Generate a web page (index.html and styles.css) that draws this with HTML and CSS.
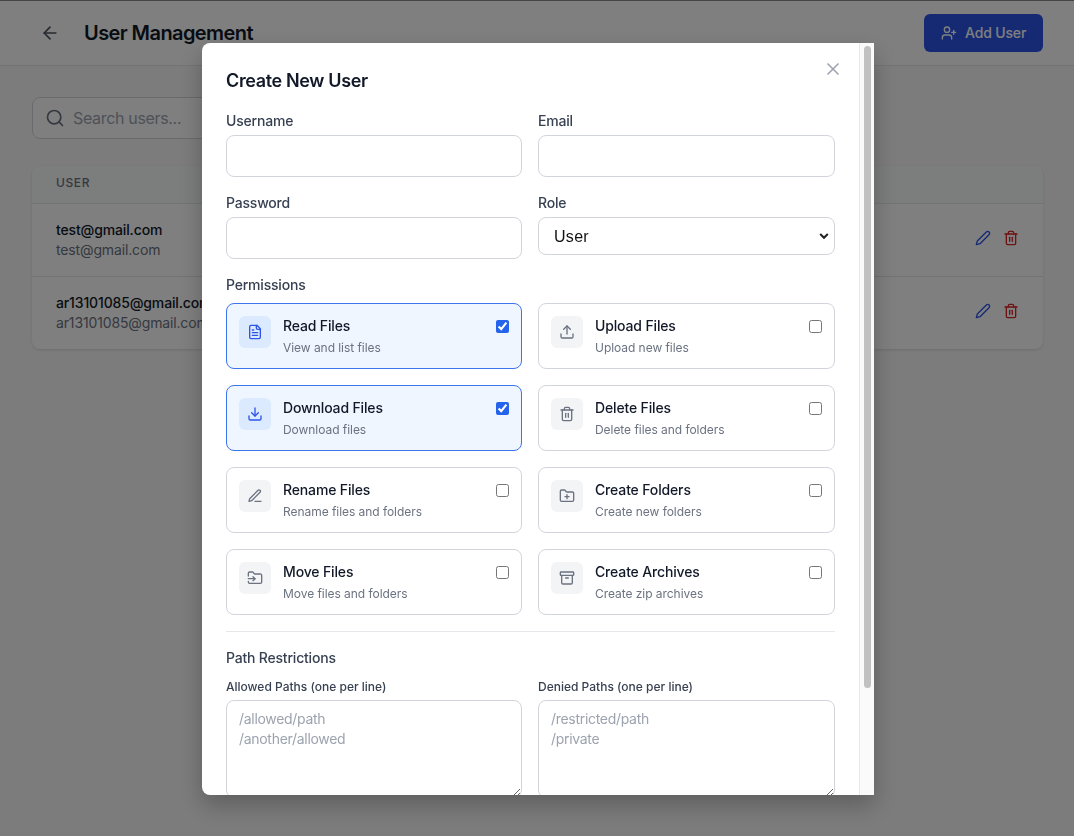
FILE: index.html
```html
<!DOCTYPE html>
<html lang="en">
<head>
    <meta charset="UTF-8">
    <title>User Management</title>
    <link rel="stylesheet" href="styles.css">
</head>
<body>
    <header class="topbar">
        <div class="topbar-left">
            <svg class="icon back-icon" width="20" height="20" viewBox="0 0 24 24"><path d="m12 19-7-7 7-7"/><path d="M19 12H5"/></svg>
            <h1>User Management</h1>
        </div>
        <button type="button" class="add-btn">
            <svg class="icon" width="16" height="16" viewBox="0 0 24 24"><path d="M16 21v-2a4 4 0 0 0-4-4H6a4 4 0 0 0-4 4v2"/><circle cx="9" cy="7" r="4"/><path d="M19 8v6"/><path d="M22 11h-6"/></svg>
            Add User
        </button>
    </header>

    <main class="content">
        <div class="search">
            <svg class="icon" width="20" height="20" viewBox="0 0 24 24"><circle cx="11" cy="11" r="8"/><path d="m21 21-4.3-4.3"/></svg>
            <span>Search users...</span>
        </div>

        <section class="users">
            <div class="users-head">User</div>
            <div class="user-row">
                <div>
                    <div class="user-name">test@gmail.com</div>
                    <div class="user-mail">test@gmail.com</div>
                </div>
                <div class="row-actions">
                    <svg class="icon edit" width="16" height="16" viewBox="0 0 24 24"><path d="M17 3a2.83 2.83 0 1 1 4 4L7.5 20.5 2 22l1.5-5.5L17 3z"/></svg>
                    <svg class="icon remove" width="16" height="16" viewBox="0 0 24 24"><path d="M3 6h18"/><path d="M19 6v14a2 2 0 0 1-2 2H7a2 2 0 0 1-2-2V6"/><path d="M8 6V4a2 2 0 0 1 2-2h4a2 2 0 0 1 2 2v2"/><path d="M10 11v6"/><path d="M14 11v6"/></svg>
                </div>
            </div>
            <div class="user-row">
                <div>
                    <div class="user-name">ar13101085@gmail.com</div>
                    <div class="user-mail">ar13101085@gmail.com</div>
                </div>
                <div class="row-actions">
                    <svg class="icon edit" width="16" height="16" viewBox="0 0 24 24"><path d="M17 3a2.83 2.83 0 1 1 4 4L7.5 20.5 2 22l1.5-5.5L17 3z"/></svg>
                    <svg class="icon remove" width="16" height="16" viewBox="0 0 24 24"><path d="M3 6h18"/><path d="M19 6v14a2 2 0 0 1-2 2H7a2 2 0 0 1-2-2V6"/><path d="M8 6V4a2 2 0 0 1 2-2h4a2 2 0 0 1 2 2v2"/><path d="M10 11v6"/><path d="M14 11v6"/></svg>
                </div>
            </div>
        </section>
    </main>

    <div class="overlay">
        <div class="modal">
            <button type="button" class="close-btn" aria-label="Close">
                <svg class="icon" width="20" height="20" viewBox="0 0 24 24"><path d="M18 6 6 18"/><path d="m6 6 12 12"/></svg>
            </button>

            <div class="modal-body">
                <h2>Create New User</h2>

                <div class="two-col">
                    <label class="field">
                        <span>Username</span>
                        <input type="text">
                    </label>
                    <label class="field">
                        <span>Email</span>
                        <input type="email">
                    </label>
                    <label class="field">
                        <span>Password</span>
                        <input type="password">
                    </label>
                    <label class="field">
                        <span>Role</span>
                        <select>
                            <option>User</option>
                            <option>Admin</option>
                        </select>
                    </label>
                </div>

                <div class="perm-title">Permissions</div>
                <div class="two-col">
                    <label class="perm on">
                        <span class="perm-icon">
                            <svg class="icon" width="16" height="16" viewBox="0 0 24 24"><path d="M15 2H6a2 2 0 0 0-2 2v16a2 2 0 0 0 2 2h12a2 2 0 0 0 2-2V7Z"/><path d="M14 2v4a2 2 0 0 0 2 2h4"/><path d="M10 9H8"/><path d="M16 13H8"/><path d="M16 17H8"/></svg>
                        </span>
                        <span class="perm-text">
                            <b>Read Files</b>
                            <small>View and list files</small>
                        </span>
                        <input type="checkbox" checked>
                    </label>
                    <label class="perm">
                        <span class="perm-icon">
                            <svg class="icon" width="16" height="16" viewBox="0 0 24 24"><path d="M21 15v4a2 2 0 0 1-2 2H5a2 2 0 0 1-2-2v-4"/><path d="m17 8-5-5-5 5"/><path d="M12 3v12"/></svg>
                        </span>
                        <span class="perm-text">
                            <b>Upload Files</b>
                            <small>Upload new files</small>
                        </span>
                        <input type="checkbox">
                    </label>
                    <label class="perm on">
                        <span class="perm-icon">
                            <svg class="icon" width="16" height="16" viewBox="0 0 24 24"><path d="M21 15v4a2 2 0 0 1-2 2H5a2 2 0 0 1-2-2v-4"/><path d="m7 10 5 5 5-5"/><path d="M12 15V3"/></svg>
                        </span>
                        <span class="perm-text">
                            <b>Download Files</b>
                            <small>Download files</small>
                        </span>
                        <input type="checkbox" checked>
                    </label>
                    <label class="perm">
                        <span class="perm-icon">
                            <svg class="icon" width="16" height="16" viewBox="0 0 24 24"><path d="M3 6h18"/><path d="M19 6v14a2 2 0 0 1-2 2H7a2 2 0 0 1-2-2V6"/><path d="M8 6V4a2 2 0 0 1 2-2h4a2 2 0 0 1 2 2v2"/><path d="M10 11v6"/><path d="M14 11v6"/></svg>
                        </span>
                        <span class="perm-text">
                            <b>Delete Files</b>
                            <small>Delete files and folders</small>
                        </span>
                        <input type="checkbox">
                    </label>
                    <label class="perm">
                        <span class="perm-icon">
                            <svg class="icon" width="16" height="16" viewBox="0 0 24 24"><path d="M12 20h9"/><path d="M16.5 3.5a2.12 2.12 0 0 1 3 3L7 19l-4 1 1-4Z"/></svg>
                        </span>
                        <span class="perm-text">
                            <b>Rename Files</b>
                            <small>Rename files and folders</small>
                        </span>
                        <input type="checkbox">
                    </label>
                    <label class="perm">
                        <span class="perm-icon">
                            <svg class="icon" width="16" height="16" viewBox="0 0 24 24"><path d="M12 10v6"/><path d="M9 13h6"/><path d="M20 20a2 2 0 0 0 2-2V8a2 2 0 0 0-2-2h-7.9a2 2 0 0 1-1.69-.9L9.6 3.9A2 2 0 0 0 7.93 3H4a2 2 0 0 0-2 2v13a2 2 0 0 0 2 2Z"/></svg>
                        </span>
                        <span class="perm-text">
                            <b>Create Folders</b>
                            <small>Create new folders</small>
                        </span>
                        <input type="checkbox">
                    </label>
                    <label class="perm">
                        <span class="perm-icon">
                            <svg class="icon" width="16" height="16" viewBox="0 0 24 24"><path d="M2 9V5a2 2 0 0 1 2-2h3.9a2 2 0 0 1 1.69.9l.81 1.2a2 2 0 0 0 1.67.9H20a2 2 0 0 1 2 2v10a2 2 0 0 1-2 2H4a2 2 0 0 1-2-2v-1"/><path d="M2 13h10"/><path d="m9 16 3-3-3-3"/></svg>
                        </span>
                        <span class="perm-text">
                            <b>Move Files</b>
                            <small>Move files and folders</small>
                        </span>
                        <input type="checkbox">
                    </label>
                    <label class="perm">
                        <span class="perm-icon">
                            <svg class="icon" width="16" height="16" viewBox="0 0 24 24"><rect x="2" y="3" width="20" height="5" rx="1"/><path d="M4 8v11a2 2 0 0 0 2 2h12a2 2 0 0 0 2-2V8"/><path d="M10 12h4"/></svg>
                        </span>
                        <span class="perm-text">
                            <b>Create Archives</b>
                            <small>Create zip archives</small>
                        </span>
                        <input type="checkbox">
                    </label>
                </div>

                <div class="paths">
                    <div class="paths-title">Path Restrictions</div>
                    <div class="two-col">
                        <label class="field small">
                            <span>Allowed Paths (one per line)</span>
                            <textarea rows="4" placeholder="/allowed/path&#10;/another/allowed"></textarea>
                        </label>
                        <label class="field small">
                            <span>Denied Paths (one per line)</span>
                            <textarea rows="4" placeholder="/restricted/path&#10;/private"></textarea>
                        </label>
                    </div>
                </div>
            </div>

            <div class="scrollbar"><div class="scrollbar-thumb"></div></div>
        </div>
    </div>
</body>
</html>
```

FILE: styles.css
```css
* {
    box-sizing: border-box;
}
html, body {
    height: 100%;
}
body {
    margin: 0;
    font-family: Inter, "Noto Sans", sans-serif;
    color: #111827;
    background-color: #f9f9f9;
    overflow: hidden;
}
h1, h2 {
    margin: 0;
    font-weight: 600;
}
button {
    font-family: inherit;
    border: 0;
    cursor: pointer;
}
.icon {
    display: block;
    flex: none;
    fill: none;
    stroke: currentColor;
    stroke-width: 2;
    stroke-linecap: round;
    stroke-linejoin: round;
}

/* page behind the dialog */
.topbar {
    display: flex;
    align-items: center;
    justify-content: space-between;
    height: 66px;
    padding: 0 31px 0 40px;
    background-color: #fff;
    border-bottom: 1px solid #e5e7eb;
}
.topbar-left {
    display: flex;
    align-items: center;
    gap: 24px;
}
.back-icon {
    color: #4b5563;
}
h1 {
    font-size: 20px;
    line-height: 28px;
    letter-spacing: -.58px;
}
.add-btn {
    display: flex;
    align-items: center;
    gap: 8px;
    width: 119px;
    height: 38px;
    padding: 0 17px;
    font-size: 14px;
    font-weight: 500;
    white-space: nowrap;
    letter-spacing: -.15px;
    color: #fff;
    background-color: #2d55e8;
    border-radius: 6px;
}
.content {
    padding: 31px 31px 0 32px;
}
.search {
    display: flex;
    align-items: center;
    gap: 8px;
    width: 448px;
    height: 42px;
    padding: 0 12px;
    font-size: 16px;
    letter-spacing: -.33px;
    color: #9ca3af;
    background-color: #fff;
    border: 1px solid #d1d5db;
    border-radius: 8px;
}
.search .icon {
    color: #6b7280;
}
.users {
    margin-top: 27px;
    background-color: #fff;
    border-radius: 8px;
    box-shadow: 0 1px 3px rgba(0, 0, 0, .12);
    overflow: hidden;
}
.users-head {
    height: 37px;
    padding: 0 24px;
    font-size: 12px;
    font-weight: 500;
    line-height: 34px;
    letter-spacing: .05em;
    text-transform: uppercase;
    color: #6b7280;
    background-color: #f9fafb;
}
.user-row {
    display: flex;
    align-items: center;
    justify-content: space-between;
    height: 73px;
    padding: 0 24px;
    font-size: 14px;
    line-height: 20px;
    letter-spacing: -.14px;
    border-top: 1px solid #e5e7eb;
}
.user-name {
    font-weight: 500;
}
.user-mail {
    color: #6b7280;
}
.row-actions {
    display: flex;
    align-items: center;
    gap: 12px;
    margin-bottom: 4px;
}
.edit {
    color: #2d55e8;
}
.remove {
    color: #dc2626;
}

/* dialog */
.overlay {
    position: fixed;
    inset: 0;
    display: flex;
    align-items: center;
    justify-content: center;
    padding-left: 2px;
    background-color: rgba(0, 0, 0, .5);
    border-top: 1px solid #444;
}
.modal {
    position: relative;
    display: flex;
    width: 672px;
    height: 752px;
    margin-top: 1px;
    background-color: #fff;
    border-radius: 8px 0 0 8px;
    box-shadow: 0 10px 25px rgba(0, 0, 0, .25);
}
.modal-body {
    flex: 1;
    min-width: 0;
    padding: 24px;
    overflow: hidden;
}
/* headless chromium hides real scrollbars, so this one is drawn */
.scrollbar {
    flex: none;
    width: 15px;
    padding: 3px 3px 0 4px;
    background-color: #fafafa;
    border-left: 1px solid #e8e8e8;
}
.scrollbar-thumb {
    height: 642px;
    background-color: #c1c1c1;
    border-radius: 4px;
}
.close-btn {
    position: absolute;
    top: 16px;
    right: 31px;
    padding: 0;
    color: #9ca3af;
    background: none;
}
h2 {
    margin-bottom: 16px;
    font-size: 18px;
    line-height: 28px;
    letter-spacing: -.36px;
}
.two-col {
    display: grid;
    grid-template-columns: 296px 297px;
    gap: 16px;
    align-items: start;
}
.field span {
    display: block;
    margin-bottom: 4px;
    font-size: 14px;
    font-weight: 500;
    line-height: 20px;
    letter-spacing: -.2px;
    color: #374151;
}
.field input,
.field select,
.field textarea {
    display: block;
    width: 100%;
    background-color: #fff;
    border: 1px solid #d1d5db;
    border-radius: 8px;
    outline: none;
}
.field input {
    height: 42px;
}
.field select {
    height: 38px;
    padding: 0 15px;
    font-family: "Liberation Sans", Arial, sans-serif;
    font-size: 16px;
    letter-spacing: .3px;
    color: #111;
    appearance: none;
    background-image: url("data:image/svg+xml,%3Csvg xmlns='http://www.w3.org/2000/svg' width='10' height='8' viewBox='0 0 10 8'%3E%3Cpath d='M1.2 2 5 5.8 8.8 2' fill='none' stroke='%23222' stroke-width='2'/%3E%3C/svg%3E");
    background-repeat: no-repeat;
    background-position: right 5px center;
}
.field.small span {
    margin-bottom: 5px;
    font-size: 12px;
    line-height: 16px;
    letter-spacing: 0;
}
.field textarea {
    padding: 8px 12px;
    font-family: inherit;
    font-size: 14px;
    line-height: 20px;
    letter-spacing: -.3px;
    resize: vertical;
}
.field textarea::placeholder {
    color: #9ca3af;
}
.perm-title {
    margin: 16px 0 8px;
    font-size: 14px;
    font-weight: 500;
    line-height: 20px;
    letter-spacing: -.2px;
    color: #374151;
}
.perm {
    display: flex;
    align-items: flex-start;
    gap: 12px;
    height: 66px;
    padding: 12px;
    background-color: #fff;
    border: 1px solid #d1d5db;
    border-radius: 8px;
}
.perm-icon {
    display: flex;
    align-items: center;
    justify-content: center;
    flex: none;
    width: 32px;
    height: 32px;
    color: #6b7280;
    background-color: #f3f4f6;
    border-radius: 6px;
}
.perm-text {
    flex: 1;
}
.perm-text b {
    display: block;
    font-size: 14px;
    font-weight: 500;
    line-height: 20px;
    letter-spacing: -.15px;
    color: #111827;
}
.perm-text small {
    display: block;
    margin-top: 4px;
    font-size: 12px;
    line-height: 16px;
    letter-spacing: -.05px;
    color: #6b7280;
}
.perm input {
    flex: none;
    width: 13px;
    height: 13px;
    margin: 4px 0 0;
    accent-color: #2563eb;
}
.perm.on {
    background-color: #eff6ff;
    border-color: #3b76ea;
}
.perm.on .perm-icon {
    color: #2d55e8;
    background-color: #dbeafe;
}
.paths {
    margin-top: 16px;
    padding-top: 16px;
    border-top: 1px solid #e5e7eb;
}
.paths-title {
    margin-bottom: 11px;
    font-size: 14px;
    font-weight: 500;
    line-height: 20px;
    letter-spacing: -.2px;
    color: #374151;
}
```
